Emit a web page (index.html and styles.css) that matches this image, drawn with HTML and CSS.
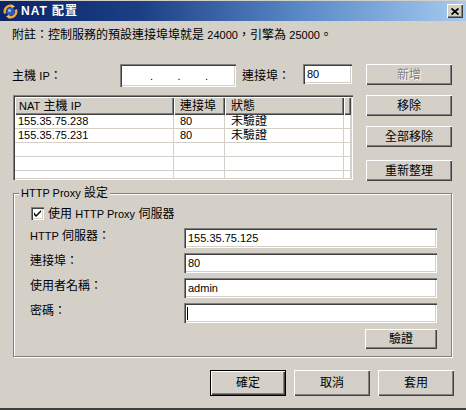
FILE: index.html
```html
<!DOCTYPE html>
<html>
<head>
<meta charset="utf-8">
<title>NAT 配置</title>
<link rel="stylesheet" href="styles.css">
</head>
<body>
<div class="window">
  <div class="titlebar">
    <svg class="appicon" width="15" height="15" viewBox="0 0 15 15">
      <circle cx="7.5" cy="7.5" r="4" fill="#2a5bb8"/>
      <circle cx="6.5" cy="6.5" r="1.5" fill="#9cc3f0"/>
      <path d="M2.2 9.5 A5.6 5.6 0 0 1 9.5 2.2" fill="none" stroke="#f3a43a" stroke-width="2.4"/>
      <path d="M12.8 5.5 A5.6 5.6 0 0 1 5.5 12.8" fill="none" stroke="#f3a43a" stroke-width="2.4"/>
      <path d="M8.5 0.3 L12 2.6 L8.6 4.6 Z" fill="#f7c25a"/>
      <path d="M6.5 14.7 L3 12.4 L6.4 10.4 Z" fill="#f7c25a"/>
    </svg>
    <span class="title"><span class="en">NAT</span> 配置</span>
    <span class="closebtn">
      <svg width="8" height="7" viewBox="0 0 8 7"><path d="M0.5 0.5 L7.5 6.5 M7.5 0.5 L0.5 6.5" stroke="#000" stroke-width="1.8"/></svg>
    </span>
  </div>

  <div class="content">
    <p class="note">附註：控制服務的預設連接埠埠就是 <span class="en">24000</span>，引擎為 <span class="en">25000</span>。</p>

    <div class="iprow">
      <span class="lbl-host">主機 <span class="en">IP</span>：</span>
      <div class="field ipfield"><span>.</span><span>.</span><span>.</span></div>
      <span class="lbl-port">連接埠：</span>
      <div class="field portfield en">80</div>
      <button class="btn side-add disabled">新增</button>
    </div>

    <div class="main">
      <div class="listview">
        <div class="lv-head">
          <span><span class="en">NAT</span> 主機 <span class="en">IP</span></span>
          <span>連接埠</span>
          <span>狀態</span>
          <span></span>
        </div>
        <div class="lv-body">
          <div class="lv-row"><span class="en">155.35.75.238</span><span class="en">80</span><span>未驗證</span><span></span></div>
          <div class="lv-row"><span class="en">155.35.75.231</span><span class="en">80</span><span>未驗證</span><span></span></div>
          <div class="lv-row"><span></span><span></span><span></span><span></span></div>
          <div class="lv-row"><span></span><span></span><span></span><span></span></div>
          <div class="lv-row"><span></span><span></span><span></span><span></span></div>
        </div>
      </div>
      <div class="sidebtns">
        <button class="btn">移除</button>
        <button class="btn">全部移除</button>
        <button class="btn">重新整理</button>
      </div>
    </div>

    <div class="group">
      <span class="legend"><span class="en">HTTP Proxy</span> 設定</span>
      <label class="checkrow">
        <span class="checkbox">
          <svg width="7" height="7" viewBox="0 0 7 7"><path d="M0 2 L0 5 L2 7 L7 2 L7 0 L2 5 Z" fill="#000"/></svg>
        </span>
        <span>使用 <span class="en">HTTP Proxy</span> 伺服器</span>
      </label>
      <div class="form">
        <span class="flabel"><span class="en">HTTP</span> 伺服器：</span>
        <div class="field wide en">155.35.75.125</div>
        <span class="flabel">連接埠：</span>
        <div class="field wide en">80</div>
        <span class="flabel">使用者名稱：</span>
        <div class="field wide en">admin</div>
        <span class="flabel">密碼：</span>
        <div class="field wide"><span class="caret"></span></div>
      </div>
      <div class="verifyrow">
        <button class="btn verify">驗證</button>
      </div>
    </div>

    <div class="footer">
      <button class="btn foot default">確定</button>
      <button class="btn foot">取消</button>
      <button class="btn foot">套用</button>
    </div>
  </div>
</div>
</body>
</html>
```
FILE: styles.css
```css
* {
  box-sizing: border-box;
  margin: 0;
  padding: 0;
}

html, body {
  width: 466px;
  height: 410px;
  overflow: hidden;
}

body {
  font-family: "Liberation Sans", "Noto Sans CJK TC", sans-serif;
  font-size: 12px;
  color: #000;
  background: #d4d0c8;
}

.en {
  font-size: 11px;
}

.window {
  width: 466px;
  height: 410px;
  background: #d4d0c8;
  border-top: 1px solid #d4d0c8;
  border-bottom: 2px solid #404040;
}

/* Title bar */
.titlebar {
  height: 20px;
  display: flex;
  align-items: center;
  padding-left: 3px;
  background: linear-gradient(to right, #0a246a 0%, #1c3f84 30%, #5a8ac8 65%, #a6caf0 100%);
}

.appicon {
  display: block;
  flex: none;
}

.title {
  margin-left: 3px;
  color: #fff;
  font-weight: bold;
  font-size: 12px;
  line-height: 14px;
  letter-spacing: 1px;
}

.title .en {
  font-size: 12px;
}

.closebtn {
  margin-left: auto;
  margin-right: 3px;
  width: 16px;
  height: 14px;
  display: flex;
  align-items: center;
  justify-content: center;
  background: #d4d0c8;
  box-shadow: inset 1px 1px #fff, inset -1px -1px #404040, inset -2px -2px #808080;
}

.closebtn svg {
  display: block;
}

/* Content */
.content {
  padding: 0 12px;
}

.note {
  margin-top: 7px;
  height: 14px;
  line-height: 14px;
  white-space: nowrap;
}

/* Fields and buttons */
.field {
  background: #fff;
  box-shadow: inset 1px 1px #808080, inset 2px 2px #404040, inset -1px -1px #fff, inset -2px -2px #d4d0c8;
  display: flex;
  align-items: center;
  padding-left: 5px;
  line-height: 14px;
}

.btn {
  font-family: inherit;
  font-size: 12px;
  color: #000;
  background: #d4d0c8;
  border: none;
  box-shadow: inset 1px 1px #fff, inset -1px -1px #404040, inset -2px -2px #808080;
  height: 21px;
  line-height: 14px;
  display: flex;
  align-items: center;
  justify-content: center;
}

.btn.disabled {
  color: #808080;
  text-shadow: 1px 1px 0 #fff;
}

/* IP row */
.iprow {
  margin-top: 22px;
  display: flex;
  align-items: flex-start;
  height: 23px;
}

.lbl-host {
  width: 108px;
  align-self: center;
  line-height: 14px;
}

.ipfield {
  width: 116px;
  height: 23px;
  padding-left: 30px;
}

.ipfield span {
  width: 27.5px;
  font-size: 11px;
  flex: none;
}

.lbl-port {
  margin-left: 6px;
  width: 61px;
  align-self: center;
  line-height: 14px;
}

.portfield {
  width: 49px;
  height: 20px;
  padding-left: 4px;
}

.side-add {
  margin-left: 14px;
  width: 86px;
}

/* List + side buttons */
.main {
  margin-top: 8px;
  display: flex;
  align-items: flex-start;
}

.listview {
  margin-left: 1px;
  width: 340px;
  height: 85px;
  padding: 2px;
  background: #fff;
  box-shadow: inset 1px 1px #808080, inset 2px 2px #404040, inset -1px -1px #fff, inset -2px -2px #d4d0c8;
  overflow: hidden;
}

.lv-head,
.lv-row {
  display: grid;
  grid-template-columns: 159px 51px 119px 7px;
}

.lv-head {
  height: 18px;
  background: #d4d0c8;
}

.lv-head > span {
  box-shadow: inset 1px 1px #fff, inset -1px -1px #404040, inset -2px -2px #808080;
  padding-left: 4px;
  line-height: 18px;
  white-space: nowrap;
  overflow: hidden;
}

.lv-head > span:nth-child(2),
.lv-head > span:nth-child(3) {
  padding-left: 6px;
}

.lv-body {
  height: 63px;
  overflow: hidden;
  background: #fff;
}

.lv-row {
  height: 14px;
}

.lv-row > span {
  border-right: 1px solid #d4d0c8;
  border-bottom: 1px solid #d4d0c8;
  padding-left: 3px;
  line-height: 13px;
  white-space: nowrap;
  overflow: hidden;
}

.lv-row > span:nth-child(2),
.lv-row > span:nth-child(3) {
  padding-left: 6px;
}

.sidebtns {
  margin-left: 13px;
  display: flex;
  flex-direction: column;
}

.sidebtns .btn {
  width: 86px;
}

.sidebtns .btn + .btn {
  margin-top: 10px;
}

.sidebtns .btn:last-child {
  margin-top: 13px;
}

/* Group box */
.group {
  position: relative;
  margin-top: 12px;
  margin-left: 1px;
  width: 439px;
  height: 164px;
  border: 1px solid #808080;
  box-shadow: 1px 1px 0 #fff, inset 1px 1px 0 #fff;
  padding: 13px 14px 0 16px;
}

.legend {
  position: absolute;
  top: -8px;
  left: 5px;
  padding: 0 2px;
  background: #d4d0c8;
  line-height: 14px;
  white-space: nowrap;
}

.checkrow {
  display: flex;
  align-items: center;
  height: 13px;
  margin-left: 1px;
  line-height: 14px;
}

.checkbox {
  width: 13px;
  height: 13px;
  margin-right: 4px;
  background: #fff;
  box-shadow: inset 1px 1px #808080, inset 2px 2px #404040, inset -1px -1px #fff, inset -2px -2px #d4d0c8;
  display: flex;
  align-items: center;
  justify-content: center;
}

.checkbox svg {
  display: block;
}

.form {
  margin-top: 8px;
  display: grid;
  grid-template-columns: 154px 253px;
  grid-auto-rows: 20px;
  row-gap: 5px;
}

.flabel {
  display: block;
  line-height: 14px;
  padding-top: 1px;
  white-space: nowrap;
}

.wide {
  height: 20px;
  padding-left: 4px;
}

.caret {
  display: block;
  width: 1px;
  height: 13px;
  background: #000;
  margin-left: -1px;
}

.verifyrow {
  margin-top: 6px;
  display: flex;
  justify-content: flex-end;
}

.verify {
  width: 72px;
  height: 20px;
}

/* Footer */
.footer {
  margin-top: 13px;
  display: flex;
  justify-content: flex-end;
  gap: 8px;
}

.foot {
  width: 76px;
  height: 26px;
}

.btn.default {
  border: 1px solid #000;
}
```
